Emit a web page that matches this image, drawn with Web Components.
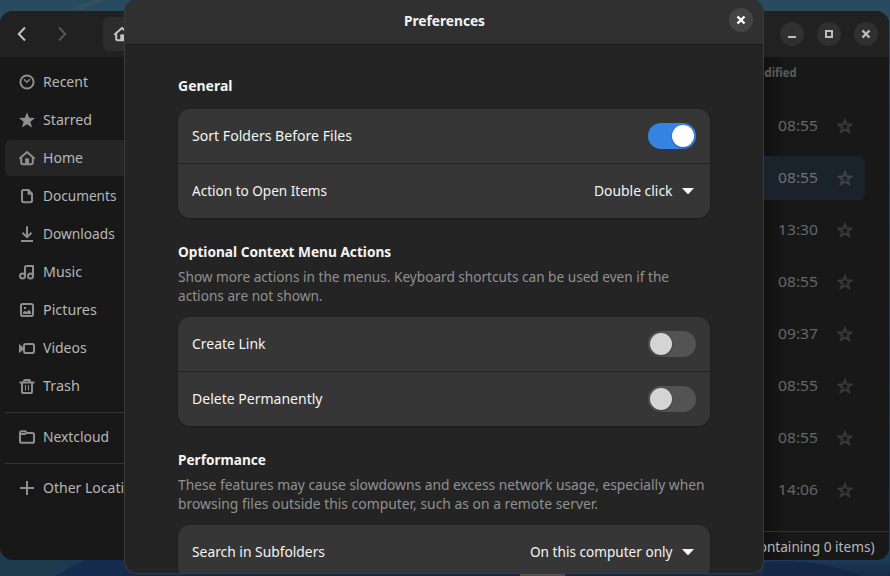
<!DOCTYPE html>
<html lang="en"><head><meta charset="utf-8"><title>Preferences</title>
<style>
html,body{margin:0;width:890px;height:576px;overflow:hidden}
body{font:14.667px/20px "Noto Sans",sans-serif;color:#f4f4f4;background:#172c40}
</style></head><body><desk-top></desk-top>
<script>
const ICONS={
recent:'<circle cx="8" cy="8" r="6.6"/><path d="M5 5.2 7.8 8.2 11 5.2" stroke-width="1.5"/>',
starred:'<path fill="currentColor" stroke="none" d="M8 0.3 10.1 5.7 16 6 11.4 9.7 13 15.5 8 12.3 3 15.5 4.6 9.7 0 6 5.9 5.7Z"/>',
home:'<path d="M.9 8.2 8 2.1 15.1 8.2" stroke-linecap="round"/><path d="M2.2 7.5V12.6Q2.2 14.2 3.8 14.2H12.2Q13.8 14.2 13.8 12.6V7.5"/><path fill="currentColor" stroke="none" d="M6.2 14V9.4Q6.2 8.3 7.3 8.3H9Q10 8.3 10 9.4V14Z"/>',
documents:'<path d="M4.6 2H9.4L13 5.6V12.6Q13 14.2 11.4 14.2H4.6Q3 14.2 3 12.6V3.6Q3 2 4.6 2Z"/><path fill="currentColor" stroke="none" d="M8.6 2V6.7H13.4Z"/>',
downloads:'<path d="M8 .3V11M3.5 6.8 8 11.2 12.5 6.8M2 15H14"/>',
music:'<circle cx="3.5" cy="11.9" r="2.5"/><circle cx="11.5" cy="11.9" r="2.5"/><path d="M6 12V3.6Q6 2.1 7.5 2.1H14V12"/>',
pictures:'<rect x="2" y="2" width="12" height="12" rx="1.8"/><path fill="currentColor" stroke="none" d="M4 12V10L6 8.7 7.5 10 10 7.8 12 10V12ZM5 5H7V7H5Z"/>',
videos:'<rect x="5" y="4" width="10" height="9" rx="1.8"/><path fill="currentColor" stroke="none" d="M0 4 4 7V10L0 13Z"/>',
trash:'<path d="M.5 4.6H15.5M5 4V3.1Q5 2 6.1 2H10Q11 2 11 3.1V4M3 5V13.4Q3 15 4.6 15H11.4Q13 15 13 13.4V5"/><path d="M6.5 7V12.5M9.5 7V12.5" stroke-width="1.1"/>',
folder:'<path d="M1 12.2V3.8Q1 2.2 2.6 2.2H6.2L7.8 4H13.4Q15 4 15 5.6V12.2Q15 13.8 13.4 13.8H2.6Q1 13.8 1 12.2ZM1 5H7"/>',
plus:'<path d="M8 1V15M1 8H15"/>',
back:'<path d="M11 1.5 4.8 8 11 14.5"/>',
forward:'<path d="M5 1.5 11.2 8 5 14.5"/>',
min:'<path d="M4 11H12"/>',
max:'<path d="M5 5H11V11H5Z"/>',
close:'<path d="M4.5 4.5 11.5 11.5M11.5 4.5 4.5 11.5" stroke-width="2.4"/>',
star:'<path stroke-width="1.9" d="M8 2 9.7 6.3 14.2 6.6 10.7 9.4 12 14 8 11.5 4 14 5.3 9.4 1.8 6.6 6.3 6.3Z"/>',
caret:'<path fill="currentColor" stroke="none" d="M2 5H14L8.7 10.7Q8 11.4 7.3 10.7Z"/>'
};
function define(name,build){
 customElements.define(name,class extends HTMLElement{
  connectedCallback(){
   if(this.shadowRoot)return;
   this.attachShadow({mode:'open'}).innerHTML=build(this);
  }
 });
}
define('sym-icon',e=>`<style>:host{display:block;flex:none;width:16px;height:16px}svg{display:block}</style><svg width="16" height="16" viewBox="0 0 16 16" fill="none" stroke="currentColor" stroke-width="2">${ICONS[e.getAttribute('name')]}</svg>`);

/* A single line of text condensed to an exact advance width. */
customElements.define('fit-text',class extends HTMLElement{
 connectedCallback(){
  if(this.shadowRoot)return;
  this.attachShadow({mode:'open'}).innerHTML='<style>:host{display:block;flex:none;white-space:nowrap;height:20px}span{display:inline-block;transform-origin:0 50%}</style><span></span>';
  const s=this.shadowRoot.querySelector('span');s.textContent=this.getAttribute('text');
  const n=s.getBoundingClientRect().width,w=(+this.getAttribute('w')||n*.93)-.5;
  this.style.width=w+'px';s.style.transform=`scaleX(${w/n})`;
 }
});
define('side-item',e=>`<style>:host{display:flex;align-items:center;height:36px;margin:0 5px 2px;padding-left:14px;gap:8px;border-radius:6px;color:#b7b7b7}:host([selected]){background:#252525}sym-icon{color:#8e8e8e}fit-text{margin-bottom:2px}</style><sym-icon name="${e.getAttribute('icon')}"></sym-icon><fit-text text="${e.getAttribute('label')}" w="${e.getAttribute('w')||''}"></fit-text>`);
define('side-bar',()=>`<style>:host{display:block;width:170px;padding-top:7px}hr{border:0;height:1px;background:#343434;margin:8px 5px 6px}</style>
${[['recent','Recent',45.5],['starred','Starred',49.5],['home','Home',40.5],['documents','Documents',74],['downloads','Downloads',72.3],['music','Music',39.5],['pictures','Pictures',54.3],['videos','Videos',44.2],['trash','Trash',37.5]].map(a=>`<side-item icon="${a[0]}" label="${a[1]}" w="${a[2]}" ${a[0]=='home'?'selected':''}></side-item>`).join('')}
<hr><side-item icon="folder" label="Nextcloud" w="66.5"></side-item><hr><side-item icon="plus" label="Other Locations" w="105.5"></side-item>`);
define('round-button',e=>`<style>:host{display:grid;place-items:center;width:24px;height:24px;border-radius:50%;background:var(--b,#303030);color:var(--c,#bdbdbd)}</style><sym-icon name="${e.getAttribute('icon')}"></sym-icon>`);
define('file-row',e=>`<style>:host{display:flex;align-items:center;justify-content:flex-end;height:44px;margin:0 24px 8px 0;padding-right:12px;gap:19px;border-radius:6px;color:#666}:host([selected]){background:#1a222c;color:#6d7176}sym-icon{color:#3a3a3a}fit-text{margin-bottom:2px}:host([selected]) sym-icon{color:#3d444d}</style><fit-text text="${e.getAttribute('time')}" w="40.5"></fit-text><sym-icon name="star"></sym-icon>`);
define('files-window',()=>`<style>:host{display:grid;grid-template:46px 1fr / 170px 1fr;width:889px;height:549px;border-radius:13px;overflow:hidden;background:#181818}
header{grid-column:1/3;display:flex;align-items:center;background:#212121;padding:0 11px 0 14px;color:#c4c4c4}
.fwd{color:#555;margin-left:24px}.path{margin-left:33px;flex:1;height:34px;border-radius:6px;background:#2d2d2d;display:flex;align-items:center;padding-left:11px;margin-right:300px}
.btns{display:flex;gap:13px}
main{display:flex;flex-direction:column;background:linear-gradient(90deg,transparent 594px,#111 594px,#121212 601px,#181818 615px)}
.head{height:32px;display:flex;justify-content:flex-end;align-items:center;padding-right:93px;font-size:12px;font-weight:700;color:#5c5c5c;margin-bottom:15px}
.rows{flex:1}.status{height:28px;border-top:1px solid #303030;display:flex;align-items:center;justify-content:flex-end;padding-right:15px;color:#b7b7b7}</style>
<header><sym-icon name="back"></sym-icon><sym-icon class="fwd" name="forward"></sym-icon><div class="path"><sym-icon name="home"></sym-icon></div><div class="btns"><round-button icon="min"></round-button><round-button icon="max"></round-button><round-button icon="close"></round-button></div></header>
<side-bar></side-bar><main><div class="head"><fit-text text="Modified" w="50"></fit-text></div><div class="rows">${['08:55','08:55','13:30','08:55','09:37','08:55','08:55','14:06'].map((t,i)=>`<file-row time="${t}" ${i==1?'selected':''}></file-row>`).join('')}</div><div class="status"><fit-text text="(containing 0 items)"  w="127"></fit-text></div></main>`);
define('toggle-switch',()=>`<style>:host{display:flex;box-sizing:border-box;width:48px;height:26px;padding:2px;border-radius:13px;background:#535353}i{width:22px;height:22px;border-radius:50%;background:#d4d4d4;box-shadow:0 1px 2px #0005}:host([on]){background:#3584e4;justify-content:flex-end}:host([on]) i{background:#fff}</style><i></i>`);
define('drop-down',e=>`<style>:host{display:flex;align-items:center;gap:7.5px}fit-text{margin-bottom:2px}</style><fit-text text="${e.getAttribute('value')}" w="${e.getAttribute('w')}"></fit-text><sym-icon name="caret"></sym-icon>`);
define('pref-row',e=>`<style>:host{display:flex;align-items:center;justify-content:space-between;height:54px;padding:0 14px}:host(:not(:first-child)){border-top:1px solid #242424}fit-text{margin-bottom:2px}</style><fit-text text="${e.getAttribute('label')}" w="${e.getAttribute('w')}"></fit-text><slot></slot>`);
define('pref-group',e=>`<style>:host{display:block}.t{font-weight:700}.d{color:#919191;margin-top:6px}.d fit-text{height:19px;line-height:19px}.card{background:#363636;border-radius:12px;overflow:hidden;margin-top:14px;box-shadow:0 1px 2px #0004}.d+.card{margin-top:12px}</style><fit-text class="t" text="${e.getAttribute('heading')}" w="${e.getAttribute('w')}"></fit-text>${e.hasAttribute('note')?`<div class="d">${e.getAttribute('note').split('|').map(l=>{const[t,w]=l.split('@');return`<fit-text text="${t}" w="${w}"></fit-text>`}).join('')}</div>`:''}<div class="card"><slot></slot></div>`);
define('pref-dialog',()=>`<style>:host{display:flex;flex-direction:column;box-sizing:border-box;width:640px;height:575px;background:#242424;border:1px solid #3a3a3a;border-top:0;border-radius:13px;overflow:hidden}
header{flex:none;display:grid;grid-template-columns:1fr auto 1fr;align-items:center;height:46px;box-sizing:border-box;border-bottom:1px solid #1b1b1b;background:#303030;padding:0 10px;font-weight:700}
header fit-text{margin-top:-4px}round-button{justify-self:end;margin-top:-3px;--b:#444;--c:#fff}
main{padding:30px 53px 0;display:flex;flex-direction:column;gap:23px}</style>
<header><span></span><fit-text text="Preferences" w="81.5"></fit-text><round-button icon="close"></round-button></header>
<main><pref-group heading="General" w="55"><pref-row label="Sort Folders Before Files" w="160.5"><toggle-switch on></toggle-switch></pref-row><pref-row label="Action to Open Items" w="135.5"><drop-down value="Double click" w="79"></drop-down></pref-row></pref-group>
<pref-group heading="Optional Context Menu Actions" w="213.7" note="Show more actions in the menus. Keyboard shortcuts can be used even if the@491.5|actions are not shown.@145"><pref-row label="Create Link" w="74"><toggle-switch></toggle-switch></pref-row><pref-row label="Delete Permanently" w="131"><toggle-switch></toggle-switch></pref-row></pref-group>
<pref-group heading="Performance" w="88.5" note="These features may cause slowdowns and excess network usage, especially when@527|browsing files outside this computer, such as on a remote server.@420.5"><pref-row label="Search in Subfolders" w="133.5"><drop-down value="On this computer only" w="143"></drop-down></pref-row></pref-group></main>`);
define('desk-top',()=>`<style>:host{display:block;position:relative;width:890px;height:576px;overflow:hidden;background:linear-gradient(#294b5f 0 20px,#213e51 50%,#1b3a54 560px,#182a48)}
files-window{position:absolute;left:0;top:11px}pref-dialog{position:absolute;left:124px;top:-1px}
svg{position:absolute;left:0;top:0}</style>
<svg width="890" height="576"><path d="M70 9 95 0H104L82 9Z" fill="#38505d"/><path d="M0 559H60L90 576H0Z" fill="#1d3a4e"/><path d="M55 576 85 560H130V576Z" fill="#132c50"/><path d="M764 562Q820 558 860 576H764Z" fill="#142746"/><path d="M120 574H764V576H120Z" fill="#16294a"/><path d="M520 574H565V576H520Z" fill="#594b50"/></svg>
<files-window></files-window><pref-dialog></pref-dialog>`);
</script></body></html>
